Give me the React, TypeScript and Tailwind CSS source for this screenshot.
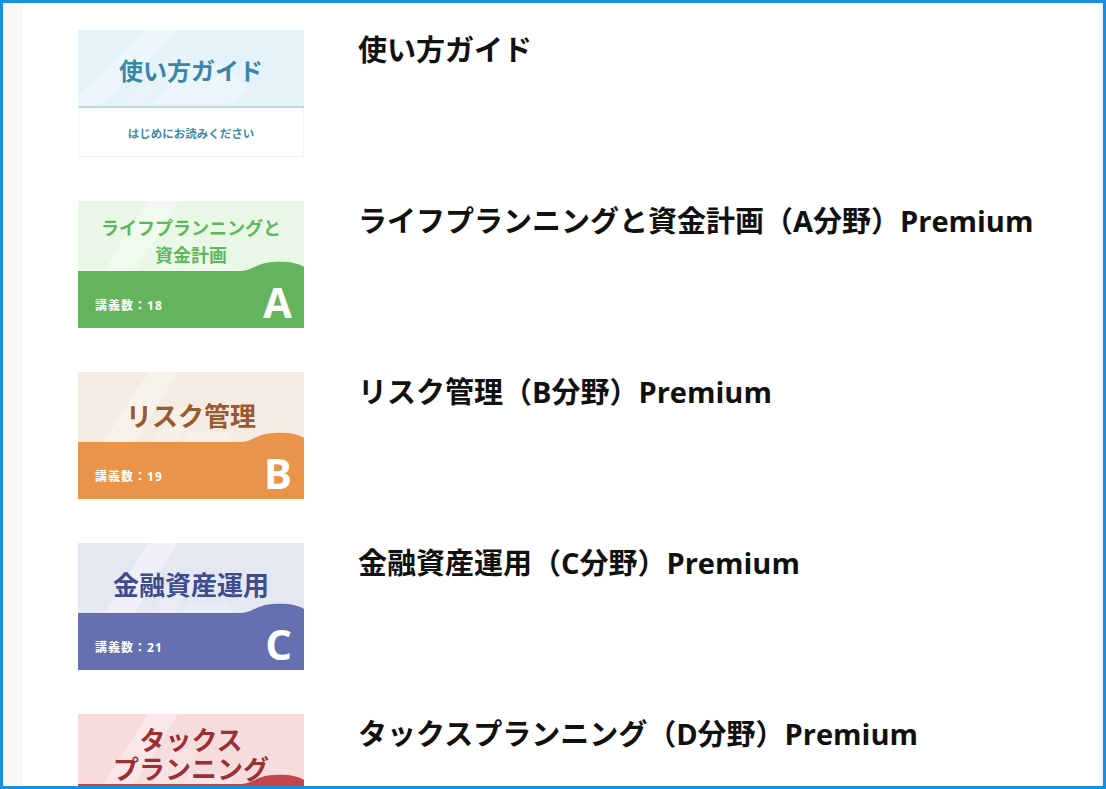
import React from "react";

type Course = {
  title: string;
  label: string[];
  letter: string;
  count: number;
  top: string;
  text: string;
  band: string;
  labelSize: string;
};

const courses: Course[] = [
  {
    title: "ライフプランニングと資金計画（A分野）Premium",
    label: ["ライフプランニングと", "資金計画"],
    letter: "A",
    count: 18,
    top: "bg-[#e9f8e6]",
    text: "text-[#5fb75b]",
    band: "#64b35d",
    labelSize: "text-[18px] leading-[27px] pt-[14px]",
  },
  {
    title: "リスク管理（B分野）Premium",
    label: ["リスク管理"],
    letter: "B",
    count: 19,
    top: "bg-[#f4ece2]",
    text: "text-[#9a5a2f]",
    band: "#e8944b",
    labelSize: "text-[26px] leading-[34px] pt-[27px]",
  },
  {
    title: "金融資産運用（C分野）Premium",
    label: ["金融資産運用"],
    letter: "C",
    count: 21,
    top: "bg-[#e5e7f3]",
    text: "text-[#3f4c8d]",
    band: "#6470b0",
    labelSize: "text-[26px] leading-[34px] pt-[25px]",
  },
  {
    title: "タックスプランニング（D分野）Premium",
    label: ["タックス", "プランニング"],
    letter: "D",
    count: 20,
    top: "bg-[#f7dcdd]",
    text: "text-[#9b2f36]",
    band: "#c2464c",
    labelSize: "text-[26px] leading-[29px] pt-[12px]",
  },
];

// faint diagonal shapes behind the card label
const Stripes = () => (
  <svg className="absolute inset-0 h-full w-full" viewBox="0 0 226 127" preserveAspectRatio="none">
    <polygon points="0,127 0,110 70,0 100,0 22,127" fill="white" opacity="0.35" />
    <polygon points="70,127 110,60 150,60 170,100 150,127" fill="white" opacity="0.25" />
    <polygon points="40,127 95,35 120,35 65,127" fill="white" opacity="0.2" />
  </svg>
);

const GuideCard = () => (
  <div className="relative flex h-[127px] w-[226px] shrink-0 flex-col overflow-hidden">
    <div className="relative flex h-[78px] items-center justify-center bg-[#e4f2f9] border-b-2 border-[#bcd8e3] pt-[6px]">
      <Stripes />
      <span className="relative text-[24px] font-bold text-[#3b86a6]">使い方ガイド</span>
    </div>
    <div className="flex flex-1 items-center justify-center border border-t-0 border-[#eef5f8] bg-white pt-[3px]">
      <span className="text-[11.5px] font-bold text-[#3d8aa9]">はじめにお読みください</span>
    </div>
  </div>
);

const CourseCard = ({ c }: { c: Course }) => (
  <div className={`relative h-[127px] w-[226px] shrink-0 overflow-hidden ${c.top}`}>
    <Stripes />
    <svg className="absolute inset-0 h-full w-full" viewBox="0 0 226 127" preserveAspectRatio="none">
      <path d="M0 70 H163 C174 70 178 62 195 61 C210 60 220 62 226 66 V127 H0 Z" fill={c.band} />
    </svg>
    <div className={`relative flex flex-col items-center font-bold ${c.text} ${c.labelSize}`}>
      {c.label.map((l) => (
        <span key={l}>{l}</span>
      ))}
    </div>
    <span className="absolute left-[17px] top-[96px] text-[12px] font-bold leading-[18px] tracking-[1px] text-white">
      講義数：{c.count}
    </span>
    <span className="absolute right-[12px] top-[76px] text-[42px] font-bold leading-[50px] text-white">
      {c.letter}
    </span>
  </div>
);

export default function App() {
  return (
    <div
      className="flex h-[789px] w-[1106px] overflow-hidden border-[3px] border-[#1a8fe0] bg-white"
      style={{ fontFamily: '"Open Sans", "Noto Sans CJK JP", sans-serif' }}
    >
      <div className="w-[20px] shrink-0 bg-[#f7f7f7]" />
      <div className="flex flex-1 flex-col gap-[44px] pl-[55px] pt-[27px]">
        <div className="flex gap-[54px]">
          <GuideCard />
          <h2 className="text-[29px] font-bold leading-[40px] text-[#111]">使い方ガイド</h2>
        </div>
        {courses.map((c) => (
          <div key={c.letter} className="flex gap-[54px]">
            <CourseCard c={c} />
            <h2 className="text-[29px] font-bold leading-[40px] text-[#111]">{c.title}</h2>
          </div>
        ))}
      </div>
      <div className="w-[2px] shrink-0 bg-[#f2f2f2]" />
    </div>
  );
}
